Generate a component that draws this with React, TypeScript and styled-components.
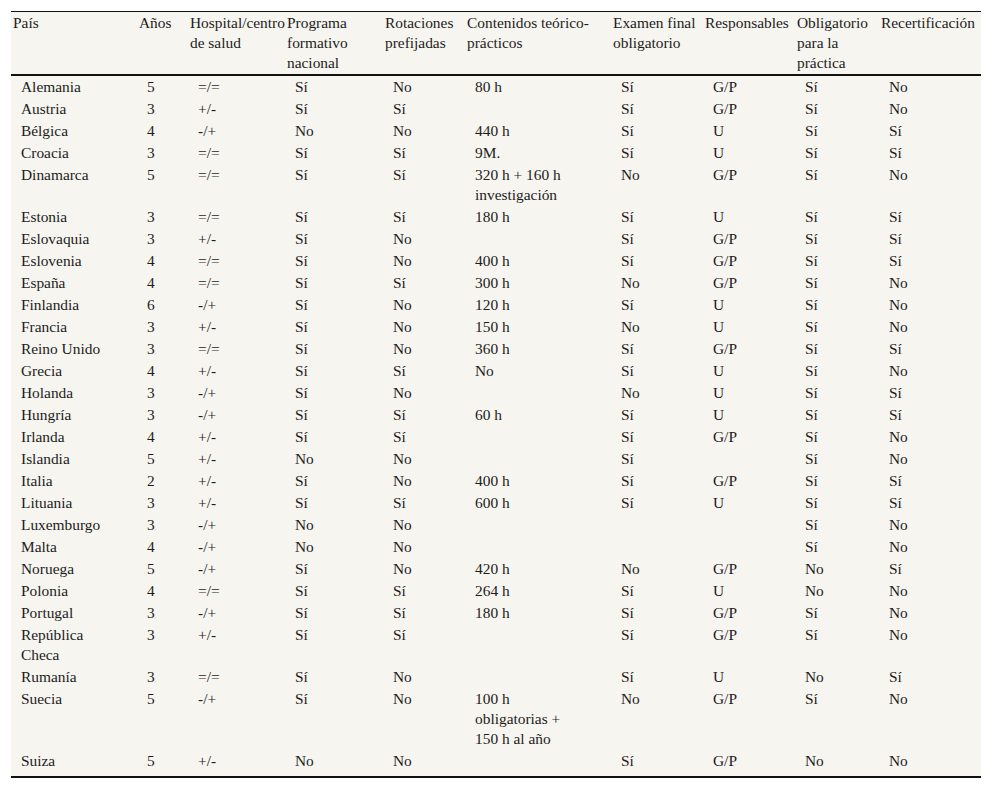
import styled, { createGlobalStyle } from "styled-components";

interface Row {
  pais: string;
  anos: string;
  hospital: string;
  programa: string;
  rotaciones: string;
  contenidos: string;
  examen: string;
  responsables: string;
  obligatorio: string;
  recert: string;
}

const columns = [
  { label: "País", width: 126 },
  { label: "Años", width: 51 },
  { label: "Hospital/centro de salud", width: 97 },
  { label: "Programa formativo nacional", width: 98 },
  { label: "Rotaciones prefijadas", width: 82 },
  { label: "Contenidos teórico-prácticos", width: 146 },
  { label: "Examen final obligatorio", width: 92 },
  { label: "Responsables", width: 92 },
  { label: "Obligatorio para la práctica", width: 84 },
  { label: "Recertificación", width: 102 },
];

const r = (
  pais: string,
  anos: string,
  hospital: string,
  programa: string,
  rotaciones: string,
  contenidos: string,
  examen: string,
  responsables: string,
  obligatorio: string,
  recert: string
): Row => ({ pais, anos, hospital, programa, rotaciones, contenidos, examen, responsables, obligatorio, recert });

// saltos de línea explícitos como en el original
const rows: Row[] = [
  r("Alemania", "5", "=/=", "Sí", "No", "80 h", "Sí", "G/P", "Sí", "No"),
  r("Austria", "3", "+/-", "Sí", "Sí", "", "Sí", "G/P", "Sí", "No"),
  r("Bélgica", "4", "-/+", "No", "No", "440 h", "Sí", "U", "Sí", "Sí"),
  r("Croacia", "3", "=/=", "Sí", "Sí", "9M.", "Sí", "U", "Sí", "Sí"),
  r("Dinamarca", "5", "=/=", "Sí", "Sí", "320 h + 160 h\ninvestigación", "No", "G/P", "Sí", "No"),
  r("Estonia", "3", "=/=", "Sí", "Sí", "180 h", "Sí", "U", "Sí", "Sí"),
  r("Eslovaquia", "3", "+/-", "Sí", "No", "", "Sí", "G/P", "Sí", "Sí"),
  r("Eslovenia", "4", "=/=", "Sí", "No", "400 h", "Sí", "G/P", "Sí", "Sí"),
  r("España", "4", "=/=", "Sí", "Sí", "300 h", "No", "G/P", "Sí", "No"),
  r("Finlandia", "6", "-/+", "Sí", "No", "120 h", "Sí", "U", "Sí", "No"),
  r("Francia", "3", "+/-", "Sí", "No", "150 h", "No", "U", "Sí", "No"),
  r("Reino Unido", "3", "=/=", "Sí", "No", "360 h", "Sí", "G/P", "Sí", "Sí"),
  r("Grecia", "4", "+/-", "Sí", "Sí", "No", "Sí", "U", "Sí", "No"),
  r("Holanda", "3", "-/+", "Sí", "No", "", "No", "U", "Sí", "Sí"),
  r("Hungría", "3", "-/+", "Sí", "Sí", "60 h", "Sí", "U", "Sí", "Sí"),
  r("Irlanda", "4", "+/-", "Sí", "Sí", "", "Sí", "G/P", "Sí", "No"),
  r("Islandia", "5", "+/-", "No", "No", "", "Sí", "", "Sí", "No"),
  r("Italia", "2", "+/-", "Sí", "No", "400 h", "Sí", "G/P", "Sí", "Sí"),
  r("Lituania", "3", "+/-", "Sí", "Sí", "600 h", "Sí", "U", "Sí", "Sí"),
  r("Luxemburgo", "3", "-/+", "No", "No", "", "", "", "Sí", "No"),
  r("Malta", "4", "-/+", "No", "No", "", "", "", "Sí", "No"),
  r("Noruega", "5", "-/+", "Sí", "No", "420 h", "No", "G/P", "No", "Sí"),
  r("Polonia", "4", "=/=", "Sí", "Sí", "264 h", "Sí", "U", "No", "No"),
  r("Portugal", "3", "-/+", "Sí", "Sí", "180 h", "Sí", "G/P", "Sí", "No"),
  r("República\nCheca", "3", "+/-", "Sí", "Sí", "", "Sí", "G/P", "Sí", "No"),
  r("Rumanía", "3", "=/=", "Sí", "No", "", "Sí", "U", "No", "Sí"),
  r("Suecia", "5", "-/+", "Sí", "No", "100 h\nobligatorias +\n150 h al año", "No", "G/P", "Sí", "No"),
  r("Suiza", "5", "+/-", "No", "No", "", "Sí", "G/P", "No", "No"),
];

const keys: (keyof Row)[] = [
  "pais",
  "anos",
  "hospital",
  "programa",
  "rotaciones",
  "contenidos",
  "examen",
  "responsables",
  "obligatorio",
  "recert",
];

const App = () => {
  return (
    <Page>
      <GlobalStyle />
      <Table>
        <colgroup>
          {columns.map((c) => (
            <Col key={c.label} $w={c.width} />
          ))}
        </colgroup>
        <thead>
          <tr>
            {columns.map((c) => (
              <HeadCell key={c.label}>{c.label}</HeadCell>
            ))}
          </tr>
        </thead>
        <tbody>
          {rows.map((row, i) => (
            <tr key={row.pais}>
              {keys.map((k) => (
                <Cell key={k} $last={i === rows.length - 1}>
                  {row[k]}
                </Cell>
              ))}
            </tr>
          ))}
        </tbody>
      </Table>
    </Page>
  );
};

const GlobalStyle = createGlobalStyle`
  html, body {
    margin: 0;
    padding: 0;
    background: #fff;
  }
  body {
    font-family: "Liberation Serif", "Times New Roman", serif;
    color: #1c1c1c;
  }
`;

const Page = styled.div`
  padding: 11px 11px 0 11px;
`;

const Table = styled.table`
  width: 970px;
  table-layout: fixed;
  border-collapse: separate;
  border-spacing: 0;
  background: #f7f5f0;
  border-top: 1px solid #111;
  border-bottom: 2px solid #111;
  font-family: "Liberation Serif", "Times New Roman", serif;
  font-size: 15.4px;
  line-height: 20px;
  color: #1c1c1c;
`;

const Col = styled.col<{ $w: number }>`
  width: ${(p) => p.$w}px;
`;

const HeadCell = styled.th`
  padding: 1px 0 1px 2px;
  text-align: left;
  vertical-align: top;
  font-weight: normal;
  border-bottom: 2px solid #111;
`;

const Cell = styled.td<{ $last?: boolean }>`
  padding: 1px 0 ${(p) => (p.$last ? "5px" : "1px")} 10px;
  vertical-align: top;
  white-space: pre-line;
`;

export default App;
